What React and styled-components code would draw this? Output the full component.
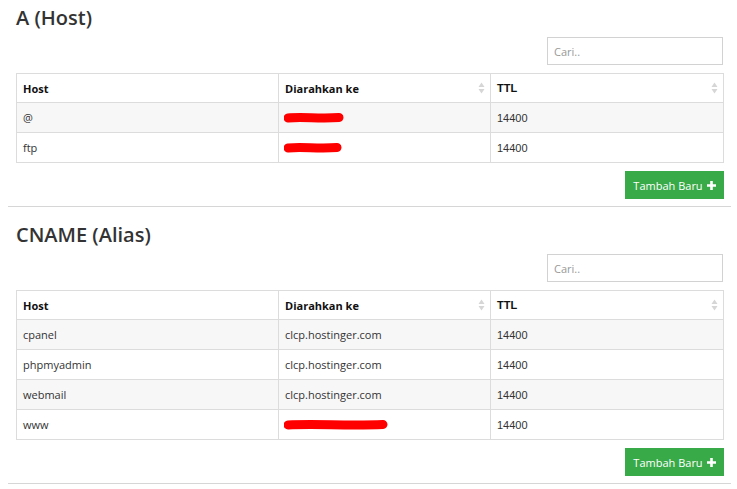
import React from 'react';
import styled, { createGlobalStyle } from 'styled-components';

const GlobalStyle = createGlobalStyle`
    body {
        margin: 0;
        background: #fff;
        font-family: "Open Sans", "Liberation Sans", sans-serif;
        color: #333;
    }
`;

const Page = styled.div`
    padding: 0 6px 0 8px;
`;

const Section = styled.section`
    padding: 0 8px;
`;

const Title = styled.h3`
    margin: 6px 0 0;
    font-size: 20px;
    line-height: 24px;
    font-weight: 600;
    color: #333;
`;

const SearchRow = styled.div`
    display: flex;
    justify-content: flex-end;
    margin-top: 7px;
`;

const SearchInput = styled.input`
    box-sizing: border-box;
    width: 176px;
    height: 28px;
    border: 1px solid #d2d2d2;
    padding: 0 6px;
    font-family: "Open Sans", sans-serif;
    font-size: 11px;
    color: #555;
    outline: none;
    &::placeholder {
        color: #999;
    }
`;

const Table = styled.table`
    width: 707px;
    margin-top: 8px;
    border-collapse: collapse;
    table-layout: fixed;
    font-size: 11px;
`;

const Th = styled.th`
    position: relative;
    height: 28px;
    padding: 0 6px;
    border: 1px solid #dcdcdc;
    text-align: left;
    font-weight: 700;
    color: #111;
    font-family: ${p => (p.$arial ? '"Liberation Sans", Arial, sans-serif' : '"Open Sans", sans-serif')};
`;

const Tr = styled.tr`
    background: ${p => (p.$striped ? '#f7f7f7' : '#fff')};
`;

const Td = styled.td`
    height: 29px;
    padding: 0 6px;
    border: 1px solid #dcdcdc;
    color: #333;
    font-family: ${p => (p.$arial ? '"Liberation Sans", Arial, sans-serif' : '"Open Sans", sans-serif')};
    white-space: nowrap;
`;

const SortIcon = styled.svg`
    position: absolute;
    right: 5px;
    top: 50%;
    margin-top: -6px;
`;

const Redacted = styled.svg`
    display: block;
    margin-left: -1px;
`;

const ButtonRow = styled.div`
    display: flex;
    justify-content: flex-end;
    margin-top: 8px;
`;

const AddButton = styled.button`
    display: flex;
    align-items: center;
    gap: 4px;
    height: 28px;
    width: 99px;
    margin-right: -1px;
    justify-content: center;
    border: none;
    background: #38aa48;
    color: #fff;
    font-family: "Open Sans", sans-serif;
    font-size: 11px;
`;

const Divider = styled.hr`
    margin: 7px 0 16px;
    border: none;
    border-top: 1px solid #d6d6d6;
`;

const Sort = () => (
    <SortIcon width="7" height="12" viewBox="0 0 7 12">
        <path d="M3.5 0.5 L6.5 5 L0.5 5 Z" fill="#d6d6d6" />
        <path d="M3.5 11.5 L6.5 7 L0.5 7 Z" fill="#d6d6d6" />
    </SortIcon>
);

const Plus = () => (
    <svg width="9" height="9" viewBox="0 0 9 9">
        <path d="M3.2 0 H5.8 V3.2 H9 V5.8 H5.8 V9 H3.2 V5.8 H0 V3.2 H3.2 Z" fill="#fff" />
    </svg>
);

const Scribble = ({ width }) => (
    <Redacted width={width} height="12" viewBox={`0 0 ${width} 12`}>
        <path
            d={`M4 6 C ${width * 0.3} 4.5, ${width * 0.6} 7, ${width - 5} 5.5`}
            stroke="#ff0000"
            strokeWidth="9"
            strokeLinecap="round"
            fill="none"
        />
    </Redacted>
);

const sections = [
    {
        title: 'A (Host)',
        rows: [
            { host: '@', target: null, width: 60, ttl: '14400' },
            { host: 'ftp', target: null, width: 58, ttl: '14400' },
        ],
    },
    {
        title: 'CNAME (Alias)',
        rows: [
            { host: 'cpanel', target: 'clcp.hostinger.com', ttl: '14400' },
            { host: 'phpmyadmin', target: 'clcp.hostinger.com', ttl: '14400' },
            { host: 'webmail', target: 'clcp.hostinger.com', ttl: '14400' },
            { host: 'www', target: null, width: 104, ttl: '14400' },
        ],
    },
];

const DnsSection = ({ title, rows }) => (
    <Section>
        <Title>{title}</Title>
        <SearchRow>
            <SearchInput placeholder="Cari.." />
        </SearchRow>
        <Table>
            <colgroup>
                <col style={{ width: 262 }} />
                <col style={{ width: 212 }} />
                <col style={{ width: 233 }} />
            </colgroup>
            <thead>
                <tr>
                    <Th>Host</Th>
                    <Th>Diarahkan ke<Sort /></Th>
                    <Th $arial>TTL<Sort /></Th>
                </tr>
            </thead>
            <tbody>
                {rows.map((r, i) => (
                    <Tr key={i} $striped={i % 2 === 0}>
                        <Td>{r.host}</Td>
                        <Td>{r.target ? r.target : <Scribble width={r.width} />}</Td>
                        <Td $arial>{r.ttl}</Td>
                    </Tr>
                ))}
            </tbody>
        </Table>
        <ButtonRow>
            <AddButton>Tambah Baru <Plus /></AddButton>
        </ButtonRow>
    </Section>
);

export default function App() {
    return (
        <Page>
            <GlobalStyle />
            {sections.map((s, i) => (
                <React.Fragment key={i}>
                    <DnsSection {...s} />
                    <Divider />
                </React.Fragment>
            ))}
        </Page>
    );
}
